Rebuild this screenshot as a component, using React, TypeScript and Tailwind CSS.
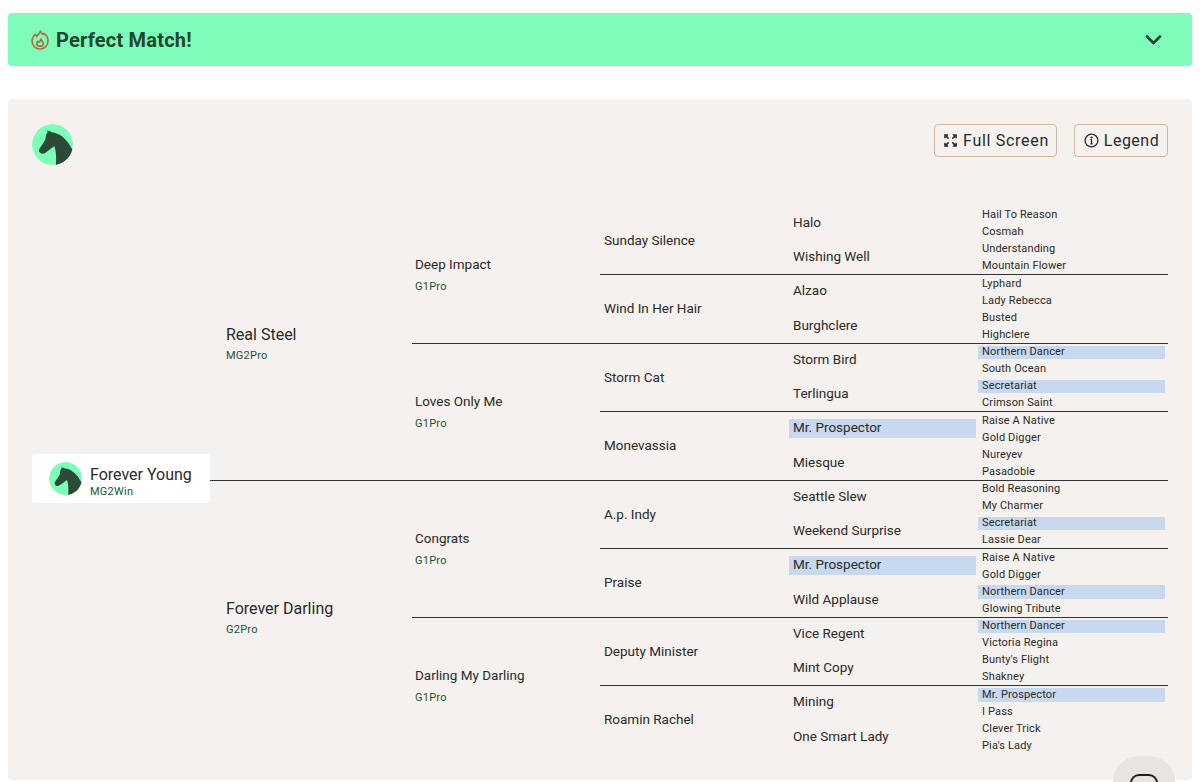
import React from "react";

type H = { n: string; s?: string; hl?: boolean; c?: H[] };
const l = (n: string, hl = false): H => ({ n, hl });
const tree: H[] = [
  { n: "Real Steel", s: "MG2Pro", c: [
    { n: "Deep Impact", s: "G1Pro", c: [
      { n: "Sunday Silence", c: [
        { n: "Halo", c: [l("Hail To Reason"), l("Cosmah")] },
        { n: "Wishing Well", c: [l("Understanding"), l("Mountain Flower")] },
      ] },
      { n: "Wind In Her Hair", c: [
        { n: "Alzao", c: [l("Lyphard"), l("Lady Rebecca")] },
        { n: "Burghclere", c: [l("Busted"), l("Highclere")] },
      ] },
    ] },
    { n: "Loves Only Me", s: "G1Pro", c: [
      { n: "Storm Cat", c: [
        { n: "Storm Bird", c: [l("Northern Dancer", true), l("South Ocean")] },
        { n: "Terlingua", c: [l("Secretariat", true), l("Crimson Saint")] },
      ] },
      { n: "Monevassia", c: [
        { n: "Mr. Prospector", hl: true, c: [l("Raise A Native"), l("Gold Digger")] },
        { n: "Miesque", c: [l("Nureyev"), l("Pasadoble")] },
      ] },
    ] },
  ] },
  { n: "Forever Darling", s: "G2Pro", c: [
    { n: "Congrats", s: "G1Pro", c: [
      { n: "A.p. Indy", c: [
        { n: "Seattle Slew", c: [l("Bold Reasoning"), l("My Charmer")] },
        { n: "Weekend Surprise", c: [l("Secretariat", true), l("Lassie Dear")] },
      ] },
      { n: "Praise", c: [
        { n: "Mr. Prospector", hl: true, c: [l("Raise A Native"), l("Gold Digger")] },
        { n: "Wild Applause", c: [l("Northern Dancer", true), l("Glowing Tribute")] },
      ] },
    ] },
    { n: "Darling My Darling", s: "G1Pro", c: [
      { n: "Deputy Minister", c: [
        { n: "Vice Regent", c: [l("Northern Dancer", true), l("Victoria Regina")] },
        { n: "Mint Copy", c: [l("Bunty's Flight"), l("Shakney")] },
      ] },
      { n: "Roamin Rachel", c: [
        { n: "Mining", c: [l("Mr. Prospector", true), l("I Pass")] },
        { n: "One Smart Lady", c: [l("Clever Trick"), l("Pia's Lady")] },
      ] },
    ] },
  ] },
];

function Horse() {
  return (
    <svg viewBox="0 0 42 42" className="w-full h-full block">
      <circle cx="21" cy="21" r="21" fill="#7dfcba" />
      <path
        d="M15.8 6.2 L17.6 8 L18.2 6.8 L20 8.4 C28 9 35.5 15 40 24 L45 30 L45 45 L24.2 45 C24.8 37 25.2 30 23 22.8 C20 24.8 16.5 27.6 13.6 29.6 C11.4 31 9 30.6 7.8 28.8 C6.8 27.4 7.2 25.8 8.2 24.4 C10.2 21.6 12.4 18.6 13.8 15.6 C14 12.4 14.6 9.6 16 8.6 Z"
        fill="#2c4a36"
      />
    </svg>
  );
}

function Branch({ h, depth }: { h: H; depth: number }) {
  const cell =
    depth === 0
      ? "w-[202px] pl-[16px] pt-[2px]"
      : depth === 1
      ? "w-[188px] pl-[3px]"
      : depth === 2
      ? "w-[189px] pl-[4px] pb-[1px]"
      : "w-[189px]";
  return (
    <div className="flex h-full min-h-0">
      <div className={`${cell} shrink-0 flex flex-col justify-center`}>
        {depth === 3 ? (
          <div className={`w-[187px] h-[18.5px] pl-[4px] flex items-center ${h.hl ? "bg-[#c7d8ef]" : ""}`}>
            <span className="text-[13.5px] text-[#2a2a2a] whitespace-nowrap -translate-y-px">{h.n}</span>
          </div>
        ) : (
          <>
            <div className={`whitespace-nowrap text-[#2a2a2a] ${depth === 0 ? "text-[16px] leading-[22px]" : "text-[13.5px] leading-[20px]"}`}>
              {h.n}
            </div>
            {h.s && (
              <div className={`text-[11px] tracking-[0.25px] text-[#24523a] leading-[14px] ${depth === 0 ? "mt-[3px]" : "mt-[6px]"}`}>{h.s}</div>
            )}
          </>
        )}
      </div>
      <div className="flex-1 min-w-0 grid grid-rows-2">
        {h.c!.map((k, i) =>
          k.c ? (
            <div key={k.n + i} className={`min-h-0 ${i === 1 && depth < 2 ? "shadow-[inset_0_1px_0_#333]" : ""}`}>
              <Branch h={k} depth={depth + 1} />
            </div>
          ) : (
            <Leaf key={k.n} h={k} />
          )
        )}
      </div>
    </div>
  );
}

function Leaf({ h }: { h: H }) {
  return (
    <div className="min-h-0 flex items-center pt-[2px]">
      <div className={`w-[187px] h-[13.5px] pl-[4px] flex items-center ${h.hl ? "bg-[#c7d8ef]" : ""}`}>
        <span className="text-[11px] tracking-[0.15px] text-[#2a2a2a] whitespace-nowrap">{h.n}</span>
      </div>
    </div>
  );
}

export default function App() {
  return (
    <div className="relative h-[782px] overflow-hidden bg-white font-['Roboto',sans-serif] text-[#2a2a2a]">
      <div className="pt-[13px] px-[8px]">
        <div className="h-[53px] rounded-[4px] bg-[#7dfcba] flex items-center pl-[23px] pr-[30px]">
          <svg viewBox="0 0 18 20" className="w-[18px] h-[20px]" fill="none" stroke="#b5693a" strokeWidth="1.6" strokeLinejoin="round" strokeLinecap="round">
            <path d="M9.6 1 C9.8 2.8 11 3.2 12 4.6 C12.6 4.2 12.9 3.8 13 3.4 C15.6 5.2 17 8 17 11 C17 15.6 13.4 19 9 19 C4.6 19 1 15.6 1 11 C1 8 2.6 6.2 4 4.4 C4.8 5 5.3 5.6 5.6 6.4 C7.2 5 8.8 3.2 9.6 1 Z" />
            <path d="M10 9 C10 10.6 12.3 11.6 12.3 13.4 C12.3 15.2 10.8 16.2 9 16.2 C7.2 16.2 5.8 15 5.8 13.4 C5.8 12.4 6.3 11.8 6.9 11.3 C7.5 11.8 7.9 12 8.3 12 C9.2 11.4 9.8 10.2 10 9 Z" />
          </svg>
          <span className="ml-[7px] text-[20px] font-bold tracking-[0.2px] text-[#24452f]">Perfect Match!</span>
          <svg viewBox="0 0 16 10" className="ml-auto w-[17px] h-[10px]" fill="none" stroke="#24452f" strokeWidth="2.6" strokeLinecap="round" strokeLinejoin="round">
            <path d="M1.5 1.5 L8 8 L14.5 1.5" />
          </svg>
        </div>
      </div>

      <div className="mt-[33px] mx-[8px] h-[681px] rounded-[4px] bg-[#f4f1ee] pt-[25px] px-[24px]">
        <div className="flex items-start justify-between">
          <div className="w-[41px] h-[41px] rounded-full overflow-hidden"><Horse /></div>
          <div className="flex gap-[17px]">
            <button className="h-[33px] w-[123px] rounded-[4px] border border-[#cdbba8] flex items-center justify-center gap-[6px] pl-[2px] text-[16px] tracking-[0.7px] text-[#2a2a2a]">
              <svg viewBox="0 0 14 14" className="w-[13px] h-[13px]" fill="none" stroke="#2a2a2a" strokeWidth="1.6">
                <path d="M1 4.5 V1 H4.5 M9.5 1 H13 V4.5 M13 9.5 V13 H9.5 M4.5 13 H1 V9.5 M1.5 1.5 L5 5 M12.5 1.5 L9 5 M12.5 12.5 L9 9 M1.5 12.5 L5 9" />
              </svg>
              Full Screen
            </button>
            <button className="h-[33px] w-[94px] rounded-[4px] border border-[#cdbba8] flex items-center justify-center gap-[5px] pl-[1px] text-[16px] tracking-[0.5px] text-[#2a2a2a]">
              <svg viewBox="0 0 16 16" className="w-[15px] h-[15px]" fill="none" stroke="#2a2a2a" strokeWidth="1.4">
                <circle cx="8" cy="8" r="6.8" />
                <path d="M8 7 V11.5 M6.8 11.5 H9.2 M6.8 7 H8" />
                <circle cx="8" cy="4.8" r="0.5" fill="#2a2a2a" />
              </svg>
              Legend
            </button>
          </div>
        </div>

        <div className="mt-[40.75px] flex h-[548px]">
          <div className="w-[178px] shrink-0 flex items-center pb-[3px]">
            <div className="w-full h-[49px] rounded-[3px] bg-white flex items-center pl-[17px] gap-[8px]">
              <div className="w-[33px] h-[33px] rounded-full overflow-hidden shrink-0"><Horse /></div>
              <div className="pt-[8px]">
                <div className="text-[16px] leading-[20px] text-[#2a2a2a]">Forever Young</div>
                <div className="text-[11px] tracking-[0.25px] leading-[14px] text-[#24523a]">MG2Win</div>
              </div>
            </div>
          </div>
          <div className="flex-1 min-w-0 grid grid-rows-2">
            <div className="min-h-0"><Branch h={tree[0]} depth={0} /></div>
            <div className="min-h-0 shadow-[inset_0_1px_0_#333]"><Branch h={tree[1]} depth={0} /></div>
          </div>
        </div>
      </div>

      <div className="absolute left-[1113px] top-[756px] w-[62px] h-[62px] rounded-[26px] bg-[#e8e4e0] flex justify-center pt-[18px]">
        <svg viewBox="0 0 28 28" className="w-[28px] h-[28px]" fill="none" stroke="#1f1f1f" strokeWidth="2">
          <rect x="1" y="1" width="26" height="22" rx="8" />
        </svg>
      </div>
    </div>
  );
}
